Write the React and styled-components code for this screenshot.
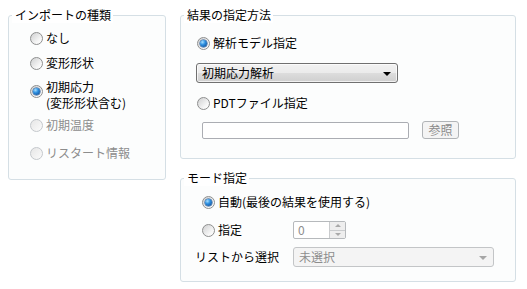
import styled, { createGlobalStyle } from "styled-components";

const Global = createGlobalStyle`
  html, body { margin: 0; padding: 0; background: #ffffff; }
  body {
    font-family: "Noto Sans CJK JP", "DejaVu Sans", sans-serif;
    font-size: 12px;
    color: #000;
  }
`;

const Page = styled.div`
  display: grid;
  grid-template-columns: 158px 336px;
  column-gap: 14px;
  align-items: start;
  padding: 15px 0 0 8px;
  width: 527px;
  height: 289px;
  box-sizing: border-box;
`;

const Column = styled.div`
  display: flex;
  flex-direction: column;
  gap: 19px;
`;

const Group = styled.div`
  position: relative;
  box-sizing: border-box;
  height: ${(p) => p.$h}px;
  border: 1px solid #d5dfe5;
  border-radius: 3px;
  background: #fcfdfd;
  display: flex;
  flex-direction: column;
  align-items: flex-start;
  padding-left: ${(p) => p.$pad || 0}px;
`;

const Legend = styled.span`
  position: absolute;
  top: -9px;
  left: ${(p) => p.$left || 3}px;
  padding: 0 2px 0 3px;
  background: #ffffff;
  line-height: 16px;
  white-space: nowrap;
`;

const Row = styled.div`
  display: flex;
  align-items: center;
  margin-top: ${(p) => p.$top || 0}px;
  margin-left: ${(p) => p.$left || 0}px;
  line-height: ${(p) => p.$lh || 16}px;
  color: ${(p) => (p.$disabled ? "#8d8d8d" : "#000")};
  white-space: nowrap;
`;

const Dot = styled.span`
  position: relative;
  flex: none;
  width: 13px;
  height: 13px;
  box-sizing: border-box;
  border-radius: 50%;
  margin-right: 3px;
  border: 1px solid ${(p) => (p.$disabled ? "#c4c8cc" : "#8e8f8f")};
  background: ${(p) =>
    p.$disabled
      ? "linear-gradient(135deg, #e6e6e6, #fbfbfb)"
      : "linear-gradient(135deg, #cfd0d1, #f7f7f7 70%, #ffffff)"};
  align-self: ${(p) => (p.$shift ? "flex-start" : "center")};
  margin-top: ${(p) => p.$shift || 0}px;

  &::after {
    content: "";
    display: ${(p) => (p.$on ? "block" : "none")};
    position: absolute;
    left: 2px;
    top: 2px;
    width: 7px;
    height: 7px;
    border-radius: 50%;
    background: radial-gradient(circle at 35% 30%, #a8e0ff 0, #2d8fe0 40%, #0b3f86 100%);
    box-shadow: 0 0 0 0.5px #1d4f8a;
  }
`;

const Radio = ({ on, disabled, shift, children, ...rest }) => (
  <Row $disabled={disabled} {...rest}>
    <Dot $on={on} $disabled={disabled} $shift={shift} />
    <span>{children}</span>
  </Row>
);

const Select = styled.div`
  box-sizing: border-box;
  width: ${(p) => p.$w}px;
  height: 20px;
  margin-top: ${(p) => p.$top || 0}px;
  margin-left: ${(p) => p.$left || 0}px;
  display: flex;
  align-items: center;
  justify-content: space-between;
  padding: 0 6px 0 5px;
  border-radius: 3px;
  border: 1px solid ${(p) => (p.$disabled ? "#c3c5c7" : "#707070")};
  color: ${(p) => (p.$disabled ? "#8d8d8d" : "#000")};
  background: ${(p) =>
    p.$disabled
      ? "#f4f4f4"
      : "linear-gradient(#f2f2f2 0, #ebebeb 50%, #dddddd 51%, #cfcfcf 100%)"};
  box-shadow: ${(p) => (p.$disabled ? "none" : "inset 0 0 0 1px rgba(255,255,255,0.7)")};
  line-height: 16px;
`;

const Caret = styled.span`
  width: 0;
  height: 0;
  border-left: 4px solid transparent;
  border-right: 4px solid transparent;
  border-top: 4px solid ${(p) => (p.$disabled ? "#a6a6a6" : "#000")};
  margin-top: 1px;
`;

const FileLine = styled.div`
  display: flex;
  align-items: center;
  gap: 13px;
  margin-top: 10px;
  margin-left: 21px;
`;

const TextBox = styled.div`
  box-sizing: border-box;
  width: ${(p) => p.$w}px;
  height: ${(p) => p.$h || 17}px;
  border: 1px solid #abadb3;
  border-radius: 2px;
  background: #fff;
`;

const Button = styled.div`
  box-sizing: border-box;
  width: 37px;
  height: 18px;
  border: 1px solid #b1b4b7;
  border-radius: 3px;
  background: #f4f4f4;
  color: #8a8a8a;
  display: flex;
  align-items: center;
  justify-content: center;
  line-height: 14px;
`;

const Field = styled.div`
  display: grid;
  grid-template-columns: ${(p) => p.$col}px auto;
  align-items: center;
  margin-top: ${(p) => p.$top || 0}px;
  margin-left: ${(p) => p.$left || 0}px;
`;

const Spinner = styled.div`
  box-sizing: border-box;
  width: 53px;
  height: 18px;
  border: 1px solid #b6b9bc;
  border-radius: 2px;
  background: #fff;
  display: flex;
  color: #8d8d8d;
`;

const SpinValue = styled.span`
  flex: 1;
  padding-left: 4px;
  line-height: 16px;
`;

const SpinButtons = styled.div`
  width: 15px;
  display: flex;
  flex-direction: column;
  border-left: 1px solid #c9cbcd;
`;

const SpinBtn = styled.div`
  flex: 1;
  display: flex;
  align-items: center;
  justify-content: center;
  background: #eeeeee;
  border-top: ${(p) => (p.$down ? "1px solid #c9cbcd" : "none")};

  &::before {
    content: "";
    border-left: 3px solid transparent;
    border-right: 3px solid transparent;
    ${(p) => (p.$down ? "border-top" : "border-bottom")}: 3px solid #a9a9a9;
  }
`;

const Label = styled.span`
  line-height: 16px;
`;

export default function App() {
  return (
    <>
      <Global />
      <Page>
        <Group $h={165} $pad={21}>
          <Legend>インポートの種類</Legend>
          <Radio $top={14}>なし</Radio>
          <Radio $top={9}>変形形状</Radio>
          <Radio on $top={8} $lh={16} shift={6}>
            <span>
              初期応力
              <br />
              (変形形状含む)
            </span>
          </Radio>
          <Radio disabled $top={6}>初期温度</Radio>
          <Radio disabled $top={12}>リスタート情報</Radio>
        </Group>

        <Column>
          <Group $h={144}>
            <Legend $left={3}>結果の指定方法</Legend>
            <Radio on $top={19} $left={16}>解析モデル指定</Radio>
            <Select $w={202} $top={12} $left={15}>
              <span>初期応力解析</span>
              <Caret />
            </Select>
            <Radio $top={12} $left={16}>PDTファイル指定</Radio>
            <FileLine>
              <TextBox $w={207} />
              <Button>参照</Button>
            </FileLine>
          </Group>

          <Group $h={104}>
            <Legend $left={3}>モード指定</Legend>
            <Radio on $top={15} $left={21}>自動(最後の結果を使用する)</Radio>
            <Field $col={91} $top={11} $left={21}>
              <Radio>指定</Radio>
              <Spinner>
                <SpinValue>0</SpinValue>
                <SpinButtons>
                  <SpinBtn />
                  <SpinBtn $down />
                </SpinButtons>
              </Spinner>
            </Field>
            <Field $col={98} $top={8} $left={14}>
              <Label>リストから選択</Label>
              <Select $w={201} $disabled>
                <span>未選択</span>
                <Caret $disabled />
              </Select>
            </Field>
          </Group>
        </Column>
      </Page>
    </>
  );
}
